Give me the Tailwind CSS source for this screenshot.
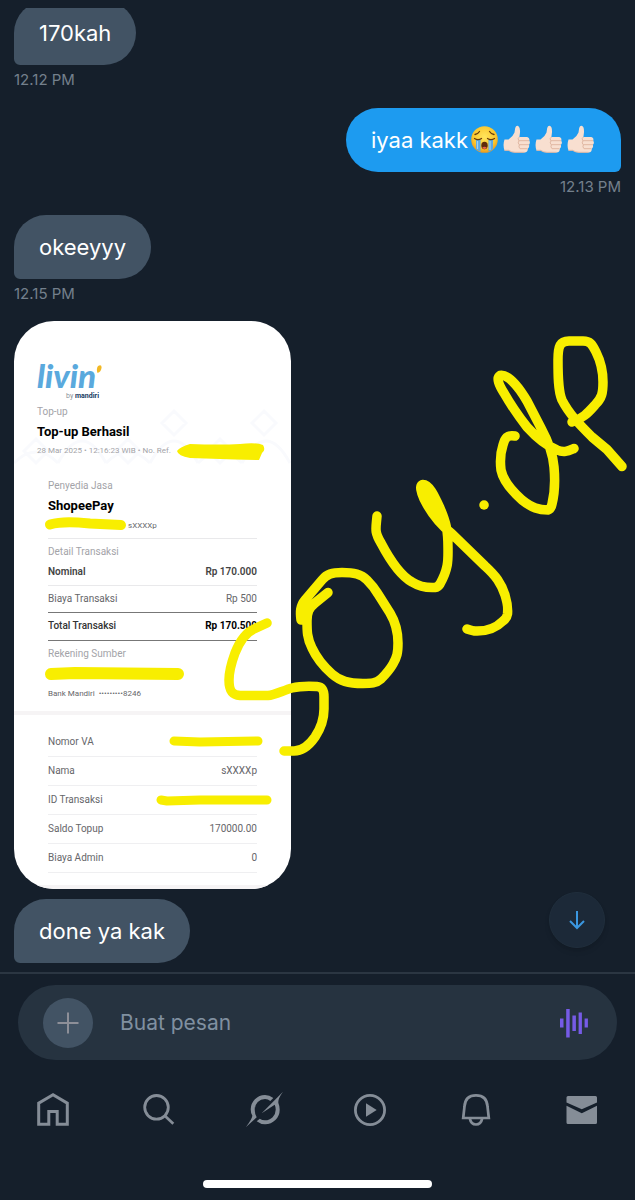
<!DOCTYPE html>
<html lang="id">

<head>
  <meta charset="utf-8" />
  <title>Pesan</title>
  <meta name="viewport" content="width=device-width, initial-scale=1" />
  <script src="https://cdn.jsdelivr.net/npm/@tailwindcss/browser@4"></script>
</head>

<body class="h-screen flex flex-col overflow-hidden bg-[#151f2b] pt-2 font-['Inter','Liberation_Sans',sans-serif]">
  <main class="relative flex-1 min-h-0 overflow-hidden">
    <div class="-mt-2 flex flex-col px-[14px] pt-px">
      <!-- Messages -->
      <div class="flex flex-col items-start">
        <p class="h-16 flex items-center rounded-[32px] rounded-bl-md bg-[#425364] px-[25px] text-[22px] text-white">170kah</p>
        <time class="mt-[5px] text-[15px] leading-5 text-[#74808c]">12.12 PM</time>
      </div>
      <div class="mt-[18px] flex flex-col items-end">
        <div class="h-16 flex items-center rounded-[32px] rounded-br-md bg-[#1d9bf0] px-[25px] text-[22px] text-white">
          <p>iyaa kakk</p>
          <svg class="w-8 h-8" viewBox="0 0 32 32" role="img" aria-label="menangis">
            <defs>
              <radialGradient id="face" cx="50%" cy="40%" r="60%">
                <stop offset="0" stop-color="#ffe55c" />
                <stop offset="0.7" stop-color="#fbc72f" />
                <stop offset="1" stop-color="#e8981f" />
              </radialGradient>
            </defs>
            <circle cx="16.500" cy="15.500" r="13.300" fill="url(#face)" />
            <path d="M8 15.500h4.500v12.200q-2.500-.7-4.500-2.700zM20.500 15.500h4.500v9.500q-2 2-4.500 2.700z" fill="#5ba9e6" />
            <path d="M9.500 17v8M22 17v9" stroke="#9bd3f8" stroke-width="1.200" />
            <path d="M6.500 14.500q3.500 2.200 7 0M19.500 14.500q3.500 2.200 7 0M7 10.500q3-.5 4.500-3M26 10.500q-3-.5-4.500-3" fill="none" stroke="#6b3d0c" stroke-width="1.300" stroke-linecap="round" />
            <ellipse cx="16.500" cy="21.500" rx="3.200" ry="3.700" fill="#5f2c0d" />
            <path d="M14.200 23.500q2.300-1.500 4.600 0q-2.300 3-4.600 0" fill="#e8604c" />
          </svg>
          <svg class="w-8 h-8" viewBox="0 0 32 32" role="img" aria-label="jempol">
            <defs>
              <g id="thumb">
                <path d="M4.500 15.500h4Q13 12.500 14.500 8.500L15.200 4Q16 1.200 18.300 2Q21 4 19.600 11.500L19.400 13H27.200Q30 13.700 29.300 16.600Q30.600 18.600 29 20.700Q29.700 23 27.800 24.700Q28 28.300 24.500 28.500H15Q11.500 28.500 8.500 26.500H4.500Q2.600 21 4.500 15.500z" fill="#f8dfd0" />
                <path d="M19.400 13Q17.200 14.500 18.800 16.700H29M19 16.800Q17.300 19 19.200 20.700H29M19.400 20.800Q18.200 23 20 24.700H27.500" fill="none" stroke="#e0b7a2" stroke-width="1" />
                <path d="M4.500 26.300h4Q11.500 28.300 15 28.300H24.500" fill="none" stroke="#dfb7a3" stroke-width="1" />
              </g>
            </defs>
            <use href="#thumb" />
          </svg>
          <svg class="w-8 h-8" viewBox="0 0 32 32" role="img" aria-label="jempol"><use href="#thumb" /></svg>
          <svg class="w-8 h-8" viewBox="0 0 32 32" role="img" aria-label="jempol"><use href="#thumb" /></svg>
        </div>
        <time class="mt-[5px] text-[15px] leading-5 text-[#74808c]">12.13 PM</time>
      </div>
      <div class="mt-[18px] flex flex-col items-start">
        <p class="h-16 flex items-center rounded-[32px] rounded-bl-md bg-[#425364] px-[25px] text-[22px] text-white">okeeyyy</p>
        <time class="mt-[5px] text-[15px] leading-5 text-[#74808c]">12.15 PM</time>
      </div>

      <!-- Receipt -->
      <div class="relative mt-[17px]">
        <article class="relative w-[277px] overflow-hidden rounded-[40px] bg-white pt-[38px] font-['Roboto','Liberation_Sans',sans-serif] text-[10px] leading-[14px] text-[#66666a]">
          <svg class="absolute left-0 top-20 w-full h-[70px]" viewBox="0 0 277 70" fill="none" stroke="#f9fafd" stroke-width="3">
            <path d="M0 62q22-22 44 0M44 62q24-44 48 0M92 62q22-22 44 0M136 62q24-44 48 0M184 62q22-22 44 0M228 62q24-44 48 0M22 38l12 12l-12 12l-12-12zM114 38l12 12l-12 12l-12-12zM206 38l12 12l-12 12l-12-12zM160 10l12 12l-12 12l-12-12zM250 10l12 12l-12 12l-12-12z" />
          </svg>
          <header class="relative px-[23px]">
            <div class="flex w-[66px] flex-col">
              <div class="flex items-start text-[#5aa9dd]">
                <span class="font-['Lato','Open_Sans',sans-serif] text-[33px] leading-8 font-black italic">livin</span>
                <svg class="w-1.5 h-3 mt-1.5 shrink-0" viewBox="0 0 6 12"><path d="M2 1Q6-1 5.500 3Q5 7 1.500 8Q0 4 2 1" fill="#f2b824" /></svg>
              </div>
              <p class="mr-1 self-end text-[7px] leading-[10px] text-[#8b9299]">by <b class="text-[#173a63]">mandiri</b></p>
            </div>
            <p class="mt-1 text-[#a3a3a8]">Top-up</p>
            <h1 class="mt-[5px] text-[13px] leading-4 font-bold text-black">Top-up Berhasil</h1>
            <p class="mt-1 text-[8px] text-[#a3a3a8]">28 Mar 2025 • 12:16:23 WIB • No. Ref.</p>
          </header>

          <section class="relative mt-[21px] px-[34px]">
            <p class="text-[#a3a3a8]">Penyedia Jasa</p>
            <h2 class="mt-1.5 text-[13px] font-bold text-black">ShopeePay</h2>
            <p class="mt-1.5 border-b border-[#e9e9eb] pb-[5px] pl-20 text-[8px]">sXXXXp</p>
            <p class="mt-1.5 text-[#a3a3a8]">Detail Transaksi</p>
            <table class="w-full">
              <tr class="h-[26px] border-b border-[#e9e9eb] font-semibold text-[#444]"><td>Nominal</td><td class="text-right">Rp 170.000</td></tr>
              <tr class="h-[27px] border-b border-[#777]"><td>Biaya Transaksi</td><td class="text-right">Rp 500</td></tr>
              <tr class="h-7 border-b border-[#777] font-medium text-[#333]"><td>Total Transaksi</td><td class="text-right font-bold text-black">Rp 170.500</td></tr>
            </table>
            <p class="mt-1.5 text-[#a3a3a8]">Rekening Sumber</p>
            <p class="mt-[26px] text-[8px]">Bank Mandiri &nbsp;•••••••••8246</p>
          </section>

          <section class="mt-2.5 border-y-4 border-[#f6f4f5] px-[34px] pt-[13px] pb-3">
            <table class="w-full">
              <tr class="h-[29px] border-b border-[#efeff1]"><td>Nomor VA</td><td></td></tr>
              <tr class="h-[29px] border-b border-[#efeff1]"><td>Nama</td><td class="text-right">sXXXXp</td></tr>
              <tr class="h-[29px] border-b border-[#efeff1]"><td>ID Transaksi</td><td></td></tr>
              <tr class="h-[29px] border-b border-[#efeff1]"><td>Saldo Topup</td><td class="text-right">170000.00</td></tr>
              <tr class="h-[29px] border-b border-[#efeff1]"><td>Biaya Admin</td><td class="text-right">0</td></tr>
            </table>
          </section>
        </article>

        <!-- Yellow pen marks -->
        <svg class="absolute left-0 top-0 w-[621px] h-[568px] overflow-visible pointer-events-none" viewBox="14 321 621 568" fill="none" stroke="#f8ee00" stroke-width="9.500" stroke-linecap="round" stroke-linejoin="round">
          <path d="M267 623L254 629C245 633 239 643 235 653C231 664 229 672 229 680C229 691 232 695 240 695.500H268C275 695 284 690 292 688C300 686 309 686 317 686.500C323 687 324 691 324 697V709C324 720 321 728 315 737C308 747 301 751 294 751H284" />
          <path d="M301 620C300 612 300 606 305 600L322 580C327 574 332 572.500 342 572.500C354 572.500 361 574 367 580C371 584 375 589 378 594L390 613C396 623 398 632 398 643C398 653 397 657 393 664C389 671 386 674 381 679C376 683.500 371 683.500 363 683.500C348 683.500 340 681 332 674C323 666 317 659 312 648C307 638 307 631 307 621C307 612 309 608 315 603L328 592.500" />
          <path d="M377 516C376 529 374 531 381 543C391 562 401 576 412 582C420 587 427 588 435 587.500Q438 587 440 584C449 568 448 559 448 548C448 530 446 522 440 508C434 495 429 484.500 423 484.500C419 485 421 492 424 499C431 513 441 525 451 533L485 566C496 576 501 583 505 595C508 605 508 608 507.500 614Q507 618 503 621C493 631 482 631.500 474 631Q470 630 467 629" />
          <path d="M427 492L444 524" stroke-width="7" />
          <path d="M484 505h.1" />
          <path d="M515 436C507 434.500 505 438 503 445C500 454 500 462 501 470C503 480 512 491 522 500C532 508 539 510 548 510Q551 509 552 504C555 492 555 478 554 467C553 453 548 441 541 428L527 401C517 384 507 374 500 375.500C496 378 499 385 504 393C512 407 520 418 527 427C537 438 547 446 557 450C564 453 568 451 574 448.500" />
          <path d="M622 466.500L607 449.500L592 437C580 425 569 414 562 400C558 391 558 375 558 360C558 346 560 341 569 341H583C590 341 592 344 596 352C601 362 603 370 603 382C603 393 602 398 595 405C588 413 582 419 572 422" />
          <path d="M177 451Q180 447 190 444Q220 445 240 444Q256 442 263 445Q266 450 262 453L259 460L235 459.500L190 458Q178 456 177 451z" fill="#f8ee00" stroke="none" />
          <path d="M50 524.500C62 521 75 522 90 523.500L121 525" stroke-width="10" />
          <path d="M51 674L75 673L178 674" stroke-width="12" />
          <path d="M174 741L200 742L258 741" stroke-width="9" />
          <path d="M161 800L167 801L200 800L267 800" stroke-width="9" />
        </svg>
      </div>

      <div class="mt-2.5 flex flex-col items-start">
        <p class="h-16 flex items-center rounded-[32px] rounded-bl-md bg-[#425364] px-[25px] text-[22px] text-white">done ya kak</p>
      </div>
    </div>

    <button type="button" aria-label="Ke pesan terbaru" class="absolute right-[30px] bottom-6 w-14 h-14 flex items-center justify-center rounded-full border border-[#202e3c] bg-[#1c2938] shadow-md">
      <svg class="w-6 h-6" viewBox="0 0 24 24" fill="none" stroke="#3b97e0" stroke-width="2"><path d="M12 3V20M5 13l7 7l7-7" /></svg>
    </button>
  </main>

  <!-- Composer -->
  <form class="border-t-2 border-[#2b3642] pt-[11px] px-[18px]">
    <div class="h-[75px] flex items-center rounded-full bg-[#263340] pl-[25px] pr-7">
      <button type="button" aria-label="Tambah" class="w-[50px] h-[50px] shrink-0 flex items-center justify-center rounded-full bg-[#425364]">
        <svg class="w-6 h-6" viewBox="0 0 24 24" stroke="#8d8f98" stroke-width="2"><path d="M12 1.500v21M1.500 12h21" /></svg>
      </button>
      <input type="text" aria-label="Buat pesan" placeholder="Buat pesan" class="ml-[27px] min-w-0 flex-1 text-[21px] text-white placeholder:text-[#8090a0] outline-none" />
      <button type="button" aria-label="Rekam suara" class="shrink-0">
        <svg class="w-[30px] h-[30px]" viewBox="0 0 30 30" fill="#765be6"><path d="M1 10.500h3.500v9H1zM7.200 1h3.500v28.500H7.200zM13.400 7.500h3.500v15.500h-3.500zM19.600 4.500h3.300v21.500h-3.300zM25.600 10.500h3.300v9h-3.300z" /></svg>
      </button>
    </div>
  </form>

  <!-- Bottom navigation -->
  <nav class="h-[100px] grid grid-cols-6 items-center justify-items-center">
    <a href="#" aria-label="Beranda">
      <svg class="w-10 h-10" viewBox="0 0 40 40" fill="none" stroke="#858d97" stroke-width="3"><path d="M20 4.700L5.700 13.200V34.300H15.800V21.500H24.200V34.300H34.300V13.200z" /></svg>
    </a>
    <a href="#" aria-label="Cari">
      <svg class="w-10 h-10" viewBox="0 0 40 40" fill="none" stroke="#858d97" stroke-width="2.800"><circle cx="17.500" cy="17.300" r="11.800" /><path d="M25.800 25.800L34.300 33.700" /></svg>
    </a>
    <a href="#" aria-label="Grok">
      <svg class="w-10 h-10" viewBox="0 0 40 40" fill="#858d97"><path d="M28.300 8Q24.500 5 20 5A14.400 14.400 0 0 0 5.700 19.300Q5.700 23 7.300 25.500Q7.500 28 1 37L11.700 27.300Q9.700 24 9.700 19.300A10.400 10.400 0 0 1 20 9Q23 9 25.300 11zM38 1.700Q32.300 9.500 33.500 13.500Q34.700 16 34.700 19.700A14.600 14.600 0 0 1 20 34.300Q15.500 34.300 11.700 31.300L14.800 28.800Q17 30.300 20 30.300A10.600 10.600 0 0 0 30.700 19.500Q30.700 17 29.700 14.800L16.700 23.300z" /></svg>
    </a>
    <a href="#" aria-label="Video">
      <svg class="w-10 h-10" viewBox="0 0 40 40"><circle cx="20" cy="20" r="14.600" fill="none" stroke="#858d97" stroke-width="2.800" /><path d="M16 13.300L26.700 20L16 26.700z" fill="#858d97" /></svg>
    </a>
    <a href="#" aria-label="Notifikasi">
      <svg class="w-10 h-10" viewBox="0 0 40 40" fill="none" stroke="#858d97" stroke-width="2.700"><path d="M7.200 28L8.500 16.500Q9.200 5.300 20 5.300Q30.800 5.300 31.500 16.500L32.800 28zM13.800 28.500Q15 34.500 20 34.500Q25 34.500 26.200 28.500" /></svg>
    </a>
    <a href="#" aria-label="Pesan">
      <svg class="w-10 h-10" viewBox="0 0 40 40" fill="#858d97"><path d="M4.500 12.500V7.500Q4.500 6 6 6H33.500Q35 6 35 7.500V12.500L19.800 19.300zM4.500 15.800L19.800 23.300L35 15.800V32.500Q35 34 33.500 34H6Q4.500 34 4.500 32.500z" /></svg>
    </a>
  </nav>
  <div class="flex justify-center pt-5 pb-3">
    <div class="w-[36%] h-2 rounded-full bg-white"></div>
  </div>
</body>

</html>
